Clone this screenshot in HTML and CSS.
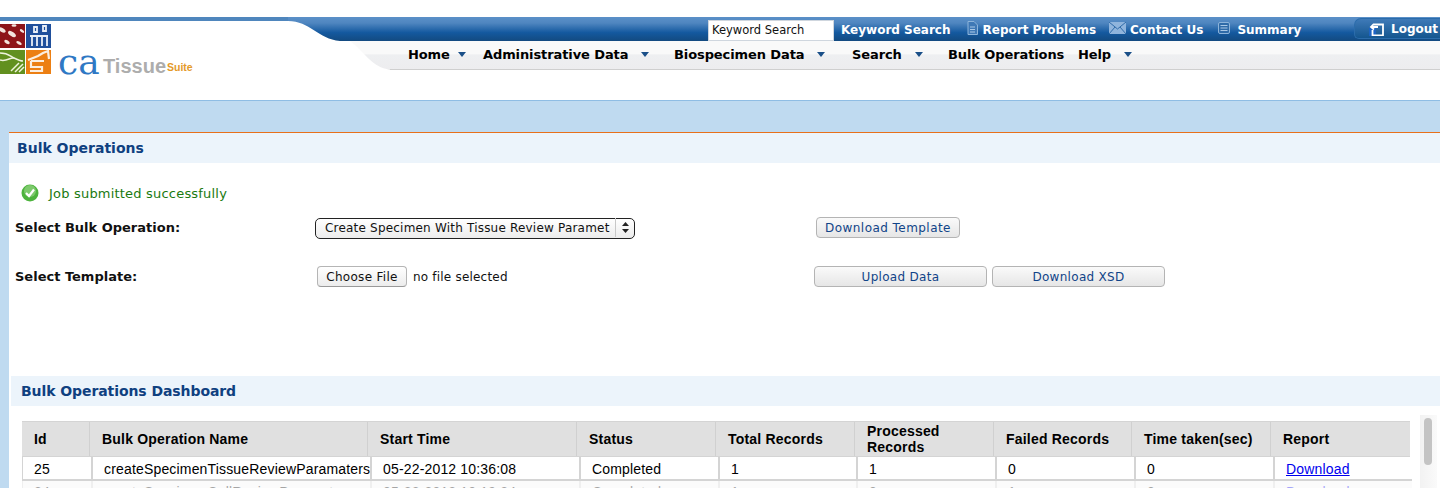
FILE: index.html
```html
<!DOCTYPE html>
<html lang="en">
<head>
<meta charset="utf-8">
<title>caTissue Suite - Bulk Operations</title>
<link rel="stylesheet" href="styles.css">
</head>
<body>
<header class="masthead">
  <div class="logo">
    <svg class="logo-tiles" width="51" height="50" viewBox="0 0 51 50">
      <rect x="0" y="0" width="25" height="24" fill="#8e1418"/>
      <g fill="#f3e4dc"><ellipse cx="2" cy="6" rx="4" ry="2" transform="rotate(30 2 6)"/><ellipse cx="12" cy="10" rx="4.500" ry="2.200" transform="rotate(35 12 10)"/><ellipse cx="7" cy="18" rx="3" ry="1.600" transform="rotate(30 7 18)"/><ellipse cx="14" cy="1.500" rx="2.500" ry="1.300"/><ellipse cx="22" cy="7" rx="2.500" ry="1.300" transform="rotate(35 22 7)"/><ellipse cx="19" cy="19" rx="3" ry="1.500" transform="rotate(30 19 19)"/></g>
      <rect x="26" y="0" width="25" height="24" fill="#1f4f9c"/>
      <g stroke="#e8eef7" stroke-width="1.800" fill="none"><path d="M30 12h18M32 12v10M37 12v10M42 12v10M47 12v10"/><path d="M34 3h3v5h-3zM43 2h3v5h-3z"/></g>
      <rect x="0" y="26" width="25" height="24" fill="#62901f"/>
      <g stroke="#eef3dc" stroke-width="1.500" fill="none"><path d="M0 29c8 0 10 3 14 5s6 3 9 3"/><path d="M0 36c7 2 10-3 14-2"/><path d="M11 47l8-8M15 48l8-8M19 48l5-5"/></g>
      <rect x="26" y="26" width="25" height="24" fill="#ec7f13"/>
      <g stroke="#fbeee0" stroke-width="2.200" fill="none"><path d="M28 36l10-4 5-3 5-2 1 8"/><path d="M31 37h13M31 37v6h11v4H30"/></g>
    </svg>
    <span class="logo-ca">ca</span><span class="logo-tissue">Tissue</span><span class="logo-suite">Suite</span>
  </div>
  <div class="bars">
    <svg class="curve" width="110" height="50" viewBox="0 0 110 50">
      <path d="M0 0C22 0 30 18 52 20L62 20C76 30 84 47 102 48.500L102 50L0 50Z" fill="#fff"/>
    </svg>
    <div class="topbar">
      <input class="keyword" type="text" value="Keyword Search">
      <a class="toplink link-search" href="#">Keyword Search</a>
      <svg class="top-icon icon-doc" width="11" height="14" viewBox="0 0 11 14"><path d="M1 .5h6l3.500 3.500v9.500H1z" fill="#3f79b6" stroke="#8db4da"/><path d="M3 6h5M3 8.500h5M3 11h5" stroke="#a9c8e6"/></svg>
      <a class="toplink" href="#">Report Problems</a>
      <svg class="top-icon icon-mail" width="17" height="12" viewBox="0 0 17 12"><rect width="17" height="12" fill="#8fb4dc"/><path d="M0 0l8.500 7L17 0M0 12l6-7M17 12l-6-7" stroke="#2f6ba8" fill="none"/></svg>
      <a class="toplink" href="#">Contact Us</a>
      <svg class="top-icon icon-list" width="12" height="12" viewBox="0 0 12 12"><rect x=".5" y=".5" width="11" height="11" rx="1.500" fill="#2f6ba8" stroke="#8db4da"/><path d="M2.500 3.500h7M2.500 6h7M2.500 8.500h7" stroke="#a9c8e6"/></svg>
      <a class="toplink" href="#">Summary</a>
      <a class="logout" href="#">
        <svg width="15" height="14" viewBox="0 0 15 14"><rect x="0" y="6" width="7" height="8" fill="#1c63c4"/><path d="M5 2.500h9v11H3.500V8" fill="none" stroke="#fff" stroke-width="1.800"/><path d="M9 5H2.500M5 1.800L2 5l3 2.500" fill="none" stroke="#fff" stroke-width="1.800"/></svg>
        Logout
      </a>
    </div>
    <nav class="navbar">
      <a class="nav-item nav-home" href="#">Home<i class="caret"></i></a>
      <a class="nav-item nav-admin" href="#">Administrative Data<i class="caret"></i></a>
      <a class="nav-item nav-bio" href="#">Biospecimen Data<i class="caret"></i></a>
      <a class="nav-item nav-search" href="#">Search<i class="caret"></i></a>
      <a class="nav-item nav-bulk" href="#">Bulk Operations</a>
      <a class="nav-item nav-help" href="#">Help<i class="caret"></i></a>
    </nav>
  </div>
</header>

<main class="panel">
  <h1 class="section-title">Bulk Operations</h1>
  <div class="message">
    <svg width="18" height="18" viewBox="0 0 18 18">
      <circle cx="9" cy="9" r="8.500" fill="#4db33d"/>
      <circle cx="9" cy="7" r="6" fill="#a5dd93" opacity=".55"/>
      <path d="M5 9l3 3 5-6.500" fill="none" stroke="#fff" stroke-width="2.200"/>
    </svg>
    <span>Job submitted successfully</span>
  </div>
  <form class="form-grid">
    <label class="form-label">Select Bulk Operation:</label>
    <div class="select-wrap">
      <select class="op-select">
        <option>Create Specimen With Tissue Review Paramet</option>
      </select>
      <svg class="select-arrows" width="7" height="11" viewBox="0 0 7 11"><path d="M3.500 0L7 4H0zM3.500 11L0 7h7z" fill="#222"/></svg>
    </div>
    <div class="actions"><button class="btn btn-template" type="button">Download Template</button></div>
    <label class="form-label">Select Template:</label>
    <div class="file-field"><button class="file-btn" type="button">Choose File</button><span>no file selected</span></div>
    <div class="actions"><button class="btn btn-wide" type="button">Upload Data</button><button class="btn btn-wide" type="button">Download XSD</button></div>
  </form>

  <section class="dashboard">
    <h2 class="section-title dash-title">Bulk Operations Dashboard</h2>
    <div class="table-area">
      <div class="table-scroll">
        <div class="thead">
          <div>Id</div><div>Bulk Operation Name</div><div>Start Time</div><div>Status</div><div>Total Records</div><div>Processed Records</div><div>Failed Records</div><div>Time taken(sec)</div><div>Report</div>
        </div>
        <div class="trow">
          <div>25</div><div class="name-cell">createSpecimenTissueReviewParamaters</div><div>05-22-2012 10:36:08</div><div>Completed</div><div>1</div><div>1</div><div>0</div><div>0</div><div><a href="#">Download</a></div>
        </div>
        <div class="trow trow-faded">
          <div>24</div><div class="name-cell">createSpecimenCellReviewParamaters</div><div>05-22-2012 10:19:24</div><div>Completed</div><div>1</div><div>0</div><div>1</div><div>0</div><div><a href="#">Download</a></div>
        </div>
      </div>
      <div class="scrolltrack"><div class="scrollthumb"></div></div>
    </div>
  </section>
</main>
</body>
</html>
```
FILE: styles.css
```css
* { box-sizing: border-box; }
html, body { margin: 0; height: 488px; overflow: hidden; }
body {
  background: #bfdaf0;
  font-family: "DejaVu Sans", Verdana, sans-serif;
  padding-top: 17px;
  position: relative;
}
body::before {
  content: "";
  position: absolute;
  left: 0; right: 0; top: 0;
  height: 17px;
  background: #fff;
}
.masthead {
  height: 84px;
  display: flex;
  background: #fff;
  border-top: 4px solid #4f86bd;
  border-bottom: 1px solid #8fbde4;
  position: relative;
}
.logo {
  width: 288px;
  flex: none;
  display: flex;
  align-items: flex-end;
  height: 53px;
  white-space: nowrap;
}
.logo-tiles { margin-right: 7px; flex: none; }
.logo-ca {
  font-family: "DejaVu Serif", serif;
  font-size: 36px;
  line-height: 36px;
  color: #2f78c4;
  display: inline-block;
  width: 45px;
  position: relative;
  top: 6px;
}
.logo-tissue {
  font-family: "Liberation Sans", Arial, sans-serif;
  font-weight: 700;
  font-size: 20px;
  line-height: 22px;
  color: #adadad;
  width: 64px;
  position: relative;
  top: 3px;
}
.logo-suite {
  font-family: "Liberation Sans", Arial, sans-serif;
  font-weight: 700;
  font-size: 10.500px;
  line-height: 14px;
  color: #e49a2a;
}
.bars {
  flex: 1;
  position: relative;
  margin-top: -4px;
  height: 53px;
}
.curve { position: absolute; left: 0; top: 4px; z-index: 1; }
.topbar {
  height: 24px;
  background: linear-gradient(#5b90c8 0%, #4f86c0 25%, #14599f 65%, #134a80 100%);
  display: flex;
  align-items: center;
  padding-left: 420px;
}
.keyword {
  width: 126px;
  height: 21px;
  margin: 2px 0 0;
  padding: 0 3px;
  border: 1px solid #cfd6de;
  background: #fff;
  color: #111;
  font: 11.500px/19px "DejaVu Sans", sans-serif;
}
.toplink {
  color: #fff;
  font-weight: 700;
  font-size: 12px;
  text-decoration: none;
  white-space: nowrap;
  margin-top: 1px;
}
.link-search { margin-left: 7px; }
.top-icon { flex: none; }
.icon-doc { margin: 0 5px 2px 16px; }
.icon-mail { margin: 0 4px 2px 13px; }
.icon-list { margin: 0 7px 3px 15px; }
.logout {
  position: absolute;
  right: 0; top: 1px;
  width: 86px;
  height: 21px;
  padding-left: 14px;
  display: flex;
  align-items: center;
  gap: 7px;
  color: #fff;
  font-size: 12px;
  font-weight: 700;
  text-decoration: none;
  background: linear-gradient(#3f7ab8, #14568f);
  border: 1px solid #2b6cab;
  border-right: 0;
  border-radius: 7px 0 0 5px;
}
.navbar {
  height: 29px;
  padding-bottom: 2px;
  background: linear-gradient(#f9f9f9 0%, #f9f9f9 45%, #eeeff1 50%, #ededef 100%);
  border-bottom: 1px solid #cfcfcf;
  display: flex;
  align-items: center;
}
.nav-item {
  color: #000;
  font-size: 13px;
  font-weight: 700;
  letter-spacing: -.1px;
  text-decoration: none;
  white-space: nowrap;
  position: relative;
  z-index: 2;
  display: flex;
  align-items: center;
}
.nav-home { margin-left: 120px; width: 75px; }
.nav-admin { width: 191px; }
.nav-bio { width: 178px; }
.nav-search { width: 96px; }
.nav-bulk { width: 130px; }
.caret {
  width: 0; height: 0;
  margin-left: 13px;
  border: 4px solid transparent;
  border-top: 5px solid #1a4f88;
  border-bottom: 0;
}
.nav-home .caret { margin-left: 8px; }
.panel {
  margin: 31px 0 0 9px;
  height: 360px;
  background: #fff;
  border-top: 1px solid #e8701a;
}
.section-title {
  margin: 0;
  height: 30px;
  padding-left: 8px;
  background: #ecf4fb;
  color: #0f4080;
  font-size: 14px;
  font-weight: 700;
  line-height: 30px;
}
.message {
  display: flex;
  align-items: center;
  gap: 10px;
  margin: 21px 0 0 12px;
  height: 18px;
  color: #1a7a10;
  font-size: 13px;
  letter-spacing: .2px;
  line-height: 20px;
}
.message span { padding-top: 1px; }
.form-grid {
  display: grid;
  grid-template-columns: 300px 499px 1fr;
  grid-auto-rows: 49px;
  align-items: center;
  margin: 1px 0 0 6px;
  height: 100px;
}
.form-label {
  font-size: 13px;
  font-weight: 700;
  color: #111;
}
.select-wrap { position: relative; width: 320px; height: 21px; }
.op-select {
  appearance: none;
  width: 320px;
  height: 21px;
  padding: 0 24px 0 9px;
  border: 1px solid #222;
  border-radius: 5px;
  background: linear-gradient(#fff, #ececec);
  font: 12px "DejaVu Sans", sans-serif;
  letter-spacing: .2px;
  color: #111;
}
.select-arrows { position: absolute; right: 6px; top: 5px; }
.select-wrap::after {
  content: "";
  position: absolute;
  right: 19px; top: 1px; bottom: 1px;
  width: 1px;
  background: #c8c8c8;
}
.file-field {
  display: flex;
  align-items: center;
  gap: 6px;
  margin-left: 2px;
  font-size: 12px;
  letter-spacing: .2px;
  color: #111;
}
.file-btn {
  width: 90px;
  height: 21px;
  padding: 0;
  border: 1px solid #b5b5b5;
  border-bottom-color: #999;
  border-radius: 4px;
  background: linear-gradient(#fff, #ececec);
  font: 12px "DejaVu Sans", sans-serif;
  letter-spacing: .3px;
  color: #111;
}
.actions { display: flex; gap: 5px; }
.btn {
  height: 21px;
  padding: 0;
  border: 1px solid #b4b4b4;
  border-radius: 4px;
  background: linear-gradient(#fafafa, #e6e6e6);
  color: #114488;
  font: 12px "DejaVu Sans", sans-serif;
  letter-spacing: .3px;
}
.btn-template { width: 144px; margin-left: 2px; letter-spacing: .45px; }
.btn-wide { width: 173px; }
.dashboard { margin-top: 73px; }
.dash-title { margin-left: 2px; padding-left: 10px; letter-spacing: -.08px; }
.table-area {
  display: flex;
  padding: 9px 0 0 13px;
  position: relative;
}
.table-scroll { width: 1390px; padding-top: 6px; flex: none; }
.thead, .trow { display: grid; color: #000; font: 14px/16px "Liberation Sans", Arial, sans-serif; }
.thead {
  grid-template-columns: 67px 278px 209px 139px 139px 139px 138px 139px 140px;
  width: 1388px;
  height: 36px;
  font-weight: 700;
  letter-spacing: .2px;
  background: #e0e0e0;
  border-top: 1px solid #d4d4d4;
  border-bottom: 1px solid #d4d4d4;
}
.thead > div {
  display: flex;
  align-items: center;
  padding-left: 12px;
  border-left: 1px solid #d0d0d0;
}
.thead > div:first-child { border-left: 0; }
.trow {
  grid-template-columns: 68px 279px 209px 139px 138px 139px 139px 139px 138px;
  height: 24px;
  letter-spacing: .17px;
  border-bottom: 2px solid #d4d4d4;
  border-left: 1px solid #d4d4d4;
}
.trow > div {
  padding: 4px 0 0 11px;
  border-left: 2px solid #d4d4d4;
  white-space: nowrap;
}
.trow > div:first-child { border-left: 0; }
.trow > .name-cell { overflow: hidden; }
.trow a { color: #0000ee; }
.trow-faded { opacity: .35; background: #f4f4f4; }
.trow-faded > div { padding-top: 3px; }
.scrolltrack {
  width: 17px;
  margin-left: 8px;
  height: 80px;
  padding: 3px 0 0 4px;
  background: linear-gradient(90deg, #f2f2f2, #fafafa);
}
.scrollthumb {
  width: 8px;
  height: 47px;
  border-radius: 4px;
  background: #c4c4c4;
}
```
